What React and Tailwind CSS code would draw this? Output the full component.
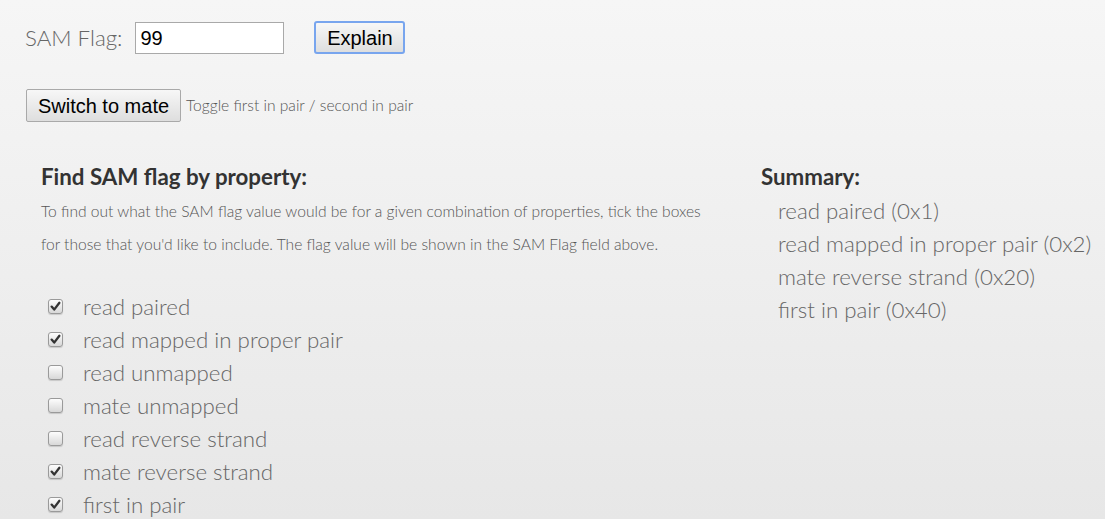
import React from "react";

const props = [
  ["read paired", true],
  ["read mapped in proper pair", true],
  ["read unmapped", false],
  ["mate unmapped", false],
  ["read reverse strand", false],
  ["mate reverse strand", true],
  ["first in pair", true],
];

const summary = [
  "read paired (0x1)",
  "read mapped in proper pair (0x2)",
  "mate reverse strand (0x20)",
  "first in pair (0x40)",
];

function Box({ checked }) {
  return (
    <span className="relative inline-block w-[15px] h-[15px] shrink-0 rounded-[3px] border border-[#9a9a9a] bg-gradient-to-b from-[#fdfdfd] to-[#d8d8d8] shadow-[0_1px_1px_rgba(0,0,0,0.15)]">
      {checked && (
        <svg viewBox="0 0 15 15" className="absolute left-[-1px] top-[-1px] w-[15px] h-[15px]">
          <path d="M3.6 7.6 L6.2 10.6 L11.4 3.8" fill="none" stroke="#333" strokeWidth="2.3" strokeLinecap="round" strokeLinejoin="round" />
        </svg>
      )}
    </span>
  );
}

export default function App() {
  return (
    <div className="min-h-[519px] bg-gradient-to-b from-[#f6f6f6] to-[#e7e7e7] font-['Lato',sans-serif] text-[#666]">
      <div className="flex items-center pt-[21px] pl-[25px]">
        <span className="text-[22.3px] font-light text-[#666] leading-[32px]">SAM Flag:</span>
        <div className="ml-[13px] w-[149px] h-[32px] border border-[#a9a9a9] bg-white flex items-center pl-[4px] font-['Liberation_Sans',Arial,sans-serif] text-[20px] text-black">
          99
        </div>
        <button className="ml-[30px] w-[91px] h-[33px] rounded-[3px] border-2 border-[#78a5ee] bg-gradient-to-b from-[#f7f7f7] to-[#dedede] font-['Liberation_Sans',Arial,sans-serif] text-[20px] text-black leading-none">
          Explain
        </button>
      </div>
      <div className="flex items-center mt-[35px] pl-[26px]">
        <button className="w-[155px] h-[33px] rounded-[2px] border border-[#a9a9a9] bg-gradient-to-b from-[#f7f7f7] to-[#dedede] font-['Liberation_Sans',Arial,sans-serif] text-[20px] text-black leading-none">
          Switch to mate
        </button>
        <span className="ml-[5px] text-[15.6px] font-light text-[#555] mt-[1px]">Toggle first in pair / second in pair</span>
      </div>
      <div className="flex pl-[41px] mt-[43px]">
        <div className="w-[720px]">
          <h2 className="text-[22.3px] font-bold text-[#333] leading-[24px]">Find SAM flag by property:</h2>
          <p className="mt-[6px] max-w-[680px] text-[15.6px] font-light leading-[33px] text-[#555]">
            To find out what the SAM flag value would be for a given combination of properties, tick the boxes for those that you'd like to include. The flag value will be shown in the SAM Flag field above.
          </p>
          <ul className="mt-[29px] pl-[7px]">
            {props.map(([label, c]) => (
              <li key={label} className="flex items-center h-[33px]">
                <Box checked={c} />
                <span className="ml-[20px] text-[22.3px] font-light text-[#666]">{label}</span>
              </li>
            ))}
          </ul>
        </div>
        <div>
          <h2 className="text-[22.3px] font-bold text-[#333] leading-[24px]">Summary:</h2>
          <ul className="mt-[5px] pl-[17px]">
            {summary.map((s) => (
              <li key={s} className="h-[33px] flex items-center text-[22.3px] font-light text-[#666]">{s}</li>
            ))}
          </ul>
        </div>
      </div>
    </div>
  );
}
